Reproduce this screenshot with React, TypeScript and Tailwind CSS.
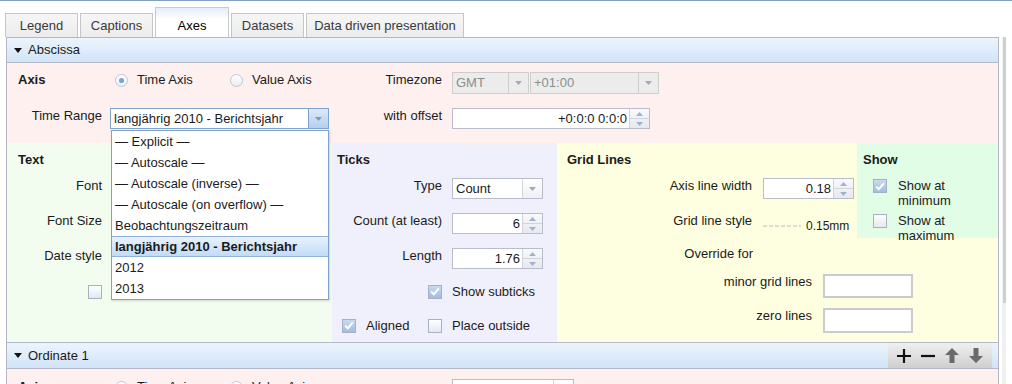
import React from 'react';

const Tri = ({ up, color = '#9aa3b5' }: { up?: boolean; color?: string }) => (
  <svg width="7" height="4" viewBox="0 0 7 4">
    <path d={up ? 'M0 4 L3.5 0 L7 4 Z' : 'M0 0 L7 0 L3.5 4 Z'} fill={color} />
  </svg>
);

const Radio = ({ checked }: { checked?: boolean }) => (
  <span className="inline-flex w-[13px] h-[13px] shrink-0 items-center justify-center rounded-full border border-[#c3c7cf] bg-gradient-to-b from-white to-[#e9edf3]">
    {checked && <span className="w-[5px] h-[5px] rounded-full bg-[#77a3cf]" />}
  </span>
);

const Check = ({ checked }: { checked?: boolean }) => (
  <span
    className={`inline-flex w-[14px] h-[14px] shrink-0 items-center justify-center border border-[#a9b1c1] ${
      checked ? 'bg-gradient-to-b from-[#c9daef] to-[#9fbde3]' : 'bg-gradient-to-b from-white to-[#e3e9f1]'
    }`}
  >
    {checked && (
      <svg width="10" height="9" viewBox="0 0 10 9">
        <path d="M1.2 4.6 L3.8 7.2 L8.8 1.4" stroke="white" strokeWidth="2" fill="none" />
      </svg>
    )}
  </span>
);

const Select = ({
  value,
  className = '',
  disabled,
  open,
}: {
  value: string;
  className?: string;
  disabled?: boolean;
  open?: boolean;
}) => {
  const border = open ? 'border-[#7fa2cc]' : disabled ? 'border-[#cdcdcd]' : 'border-[#b9bdc9]';
  const bg = disabled ? 'bg-[#ececec] text-[#8c8c8c]' : 'bg-white';
  return (
    <div className={`flex h-[21px] border ${border} ${bg} ${className}`}>
      <div className="flex-1 pl-[3px] leading-[19px] whitespace-nowrap overflow-hidden">{value}</div>
      <div
        className={`w-[20px] flex items-center justify-center border-l ${
          open
            ? 'border-[#7fa2cc] bg-gradient-to-b from-[#dce9f8] to-[#b7cfee]'
            : disabled
            ? 'border-[#cdcdcd] bg-[#ececec]'
            : 'border-[#d3d6dd] bg-gradient-to-b from-white to-[#eef0f3]'
        }`}
      >
        <Tri color={open ? '#7d97bd' : '#a4a8b0'} />
      </div>
    </div>
  );
};

const Spin = ({ value, className = '' }: { value: string; className?: string }) => (
  <div className={`flex h-[21px] border border-[#b9bdc9] bg-white ${className}`}>
    <div className="flex-1 pr-[2px] text-right leading-[19px] whitespace-nowrap">{value}</div>
    <div className="w-[20px] flex flex-col border-l border-[#d0d4dc] bg-gradient-to-b from-[#f8f9fb] to-[#e7e9ee]">
      <div className="flex-1 flex items-center justify-center border-b border-[#d0d4dc]">
        <Tri up color="#9fb2d2" />
      </div>
      <div className="flex-1 flex items-center justify-center">
        <Tri color="#9fb2d2" />
      </div>
    </div>
  </div>
);

const Caret = () => (
  <svg width="8" height="5" viewBox="0 0 8 5">
    <path d="M0 0 L8 0 L4 5 Z" fill="#111" />
  </svg>
);

const tabs = ['Legend', 'Captions', 'Axes', 'Datasets', 'Data driven presentation'];
const tabW = ['w-[73px]', 'w-[73px]', 'w-[74px]', 'w-[73px]', 'w-[158px]'];

const rangeOptions = [
  '— Explicit —',
  '— Autoscale —',
  '— Autoscale (inverse) —',
  '— Autoscale (on overflow) —',
  'Beobachtungszeitraum',
  'langjährig 2010 - Berichtsjahr',
  '2012',
  '2013',
];

const AxisRow = ({ timeAxis }: { timeAxis: boolean }) => (
  <div className="flex h-[22px] items-start">
    <div className="flex h-[16px] w-[336px] items-center pl-[11px]">
      <span className="w-[97px] font-bold">Axis</span>
      <div className="flex w-[115px] items-center">
        <Radio checked={timeAxis} />
        <span className="ml-[9px]">Time Axis</span>
      </div>
      <div className="flex items-center">
        <Radio checked={!timeAxis} />
        <span className="ml-[9px]">Value Axis</span>
      </div>
    </div>
    {timeAxis ? (
      <>
        <span className="w-[99px] text-right leading-[16px]">Timezone</span>
        <Select value="GMT" disabled className="ml-[10px] w-[77px] h-[22px]" />
        <Select value="+01:00" disabled className="ml-[1px] w-[129px] h-[22px]" />
      </>
    ) : (
      <>
        <span className="w-[99px]" />
        <Select value="" className="ml-[10px] w-[122px]" />
      </>
    )}
  </div>
);

export default function App() {
  return (
    <div className="relative w-[1012px] h-[384px] overflow-hidden bg-white border-t border-[#7ea2c5] font-['Liberation_Sans',Arial,sans-serif] text-[13px] text-[#1b1b1b]">
      {/* tab strip */}
      <div className="flex h-[36px] items-end gap-[2px] pl-[5px]">
        {tabs.map((t, i) =>
          t === 'Axes' ? (
            <div
              key={t}
              className={`${tabW[i]} h-[30px] flex items-center justify-center pt-[6px] border-t border-x border-[#c3cad6] bg-gradient-to-b from-[#e3eefa] to-white to-40% text-black`}
            >
              {t}
            </div>
          ) : (
            <div
              key={t}
              className={`${tabW[i]} h-[24px] flex items-center justify-center border-t border-x border-[#c6c6c6] bg-gradient-to-b from-[#f6f6f6] to-[#ececec] text-[#3a3a3a]`}
            >
              {t}
            </div>
          )
        )}
      </div>

      <div className="flex">
        {/* axes panel */}
        <div className="ml-[6px] w-[993px] border-x border-[#b4b7c6]">
          <div className="flex h-[26px] items-center border-y border-[#b4b7c6] bg-gradient-to-b from-[#ecf4fc] to-[#d1e4f8] pl-[7px]">
            <Caret />
            <span className="ml-[6px]">Abscissa</span>
          </div>

          <div className="h-[80px] bg-[#fdf0ef] pt-[9px]">
            <AxisRow timeAxis />
            <div className="mt-[14px] flex h-[21px] items-start">
              <div className="flex w-[336px] items-start">
                <span className="w-[95px] text-right leading-[16px]">Time Range</span>
                <Select value="langjährig 2010 - Berichtsjahr" open className="ml-[8px] w-[219px]" />
              </div>
              <span className="w-[99px] text-right leading-[16px]">with offset</span>
              <Spin value="+0:0:0 0:0:0" className="ml-[10px] w-[198px]" />
            </div>
          </div>

          <div className="flex h-[199px]">
            {/* Text */}
            <div className="w-[325px] bg-[#f2fdf0] pt-[9px]">
              <div className="h-[16px] pl-[11px] font-bold leading-[16px]">Text</div>
              <div className="mt-[10px] flex h-[21px] items-start">
                <span className="w-[95px] text-right leading-[16px]">Font</span>
              </div>
              <div className="mt-[14px] flex h-[21px] items-start">
                <span className="w-[95px] text-right leading-[16px]">Font Size</span>
              </div>
              <div className="mt-[14px] flex h-[21px] items-start">
                <span className="w-[95px] text-right leading-[16px]">Date style</span>
              </div>
              <div className="mt-[12px] flex h-[21px] items-center">
                <div className="flex w-[95px] justify-end">
                  <Check />
                </div>
              </div>
            </div>

            {/* Ticks */}
            <div className="w-[225px] bg-[#f0f0fc] pt-[9px]">
              <div className="h-[16px] pl-[5px] font-bold leading-[16px]">Ticks</div>
              <div className="mt-[10px] flex h-[21px] items-start">
                <span className="w-[110px] text-right leading-[16px]">Type</span>
                <Select value="Count" className="ml-[10px] w-[91px]" />
              </div>
              <div className="mt-[14px] flex h-[21px] items-start">
                <span className="w-[110px] text-right leading-[16px]">Count (at least)</span>
                <Spin value="6" className="ml-[10px] w-[91px]" />
              </div>
              <div className="mt-[14px] flex h-[21px] items-start">
                <span className="w-[110px] text-right leading-[16px]">Length</span>
                <Spin value="1.76" className="ml-[10px] w-[91px]" />
              </div>
              <div className="mt-[12px] flex h-[21px] items-center">
                <div className="flex w-[110px] justify-end">
                  <Check checked />
                </div>
                <span className="ml-[10px]">Show subticks</span>
              </div>
              <div className="mt-[13px] flex h-[21px] items-center">
                <div className="flex w-[96px] items-center pl-[10px]">
                  <Check checked />
                  <span className="ml-[10px]">Aligned</span>
                </div>
                <Check />
                <span className="ml-[10px]">Place outside</span>
              </div>
            </div>

            {/* Grid Lines */}
            <div className="w-[441px] bg-[#fefee1]">
              <div className="flex h-[95px]">
                <div className="w-[300px] pt-[9px]">
                  <div className="h-[16px] pl-[10px] font-bold leading-[16px]">Grid Lines</div>
                  <div className="mt-[10px] flex h-[21px] items-start">
                    <span className="w-[195px] text-right leading-[16px]">Axis line width</span>
                    <Spin value="0.18" className="ml-[11px] w-[91px]" />
                  </div>
                  <div className="mt-[14px] flex h-[21px] items-start">
                    <span className="w-[195px] text-right leading-[16px]">Grid line style</span>
                    <div className="ml-[11px] mt-[4px] flex items-center">
                      <svg width="38" height="2" viewBox="0 0 38 2">
                        <line x1="0" y1="1" x2="38" y2="1" stroke="#bdbdbd" strokeWidth="1" strokeDasharray="4 2" />
                      </svg>
                      <span className="ml-[5px] text-[12px]">0.15mm</span>
                    </div>
                  </div>
                </div>
                <div className="h-[95px] w-[141px] bg-[#e1fde5] pl-[6px] pt-[9px]">
                  <div className="h-[16px] font-bold leading-[16px]">Show</div>
                  <div className="mt-[10px] flex items-start pl-[10px]">
                    <span className="mt-[1px] flex">
                      <Check checked />
                    </span>
                    <span className="ml-[11px] leading-[15px]">
                      Show at
                      <br />
                      minimum
                    </span>
                  </div>
                  <div className="mt-[5px] flex items-start pl-[10px]">
                    <span className="mt-[1px] flex">
                      <Check />
                    </span>
                    <span className="ml-[11px] leading-[15px]">
                      Show at
                      <br />
                      maximum
                    </span>
                  </div>
                </div>
              </div>
              <div className="mt-[8px] flex h-[21px] items-start">
                <span className="w-[196px] text-right leading-[16px]">Override for</span>
              </div>
              <div className="mt-[7px] flex h-[24px] items-start">
                <span className="w-[255px] text-right leading-[16px]">minor grid lines</span>
                <div className="ml-[11px] h-[24px] w-[90px] border-2 border-[#cbcbcb] bg-white" />
              </div>
              <div className="mt-[10px] flex h-[25px] items-start">
                <span className="w-[255px] text-right leading-[16px]">zero lines</span>
                <div className="ml-[11px] h-[25px] w-[90px] border-2 border-[#cbcbcb] bg-white" />
              </div>
            </div>
          </div>

          {/* Ordinate 1 */}
          <div className="flex h-[27px] items-center border-y border-[#b4b7c6] bg-gradient-to-b from-[#ecf4fc] to-[#d1e4f8] pl-[7px]">
            <Caret />
            <span className="ml-[6px]">Ordinate 1</span>
            <div className="ml-auto mr-[6px] flex h-full w-[104px] items-center justify-around bg-gradient-to-b from-[#f0f0f0] to-[#cfcfcf] px-[4px]">
              <svg width="14" height="14" viewBox="0 0 14 14">
                <path d="M7 0 V14 M0 7 H14" stroke="#111" strokeWidth="2.2" />
              </svg>
              <svg width="14" height="14" viewBox="0 0 14 14">
                <path d="M0 7 H14" stroke="#111" strokeWidth="2.2" />
              </svg>
              <svg width="14" height="15" viewBox="0 0 14 15">
                <path d="M7 0 L14 7 H9.5 V15 H4.5 V7 H0 Z" fill="#6a6a6a" />
              </svg>
              <svg width="14" height="15" viewBox="0 0 14 15">
                <path d="M7 15 L14 8 H9.5 V0 H4.5 V8 H0 Z" fill="#6a6a6a" />
              </svg>
            </div>
          </div>
          <div className="h-[80px] bg-[#fdf0ef] pt-[10px]">
            <AxisRow timeAxis={false} />
          </div>
        </div>

        {/* scrollbar edge */}
        <div className="ml-[3px] w-[4px] bg-[#f0f0f0]">
          <div className="ml-[1px] h-[266px] w-[3px] bg-[#cfcfcf]" />
        </div>
      </div>

      {/* open dropdown of the Time Range select */}
      <div className="absolute left-[111px] top-[129px] w-[218px] border border-[#7fa2cc] bg-white shadow-[1px_1px_2px_rgba(0,0,0,0.15)]">
        {rangeOptions.map((o) =>
          o.startsWith('langjährig') ? (
            <div
              key={o}
              className="h-[21px] border-y border-[#8fb1da] bg-gradient-to-b from-[#e9f2fc] to-[#c2dbf6] pl-[3px] font-bold leading-[19px]"
            >
              {o}
            </div>
          ) : (
            <div key={o} className="h-[21px] pl-[3px] leading-[21px]">
              {o}
            </div>
          )
        )}
      </div>
    </div>
  );
}
